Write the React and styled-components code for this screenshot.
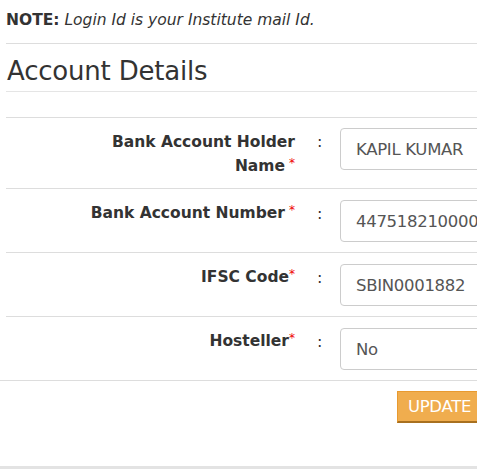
import React from "react";
import styled, { createGlobalStyle } from "styled-components";

const GlobalStyle = createGlobalStyle`
  html, body {
    margin: 0;
    padding: 0;
    background: #fff;
    overflow: hidden;
  }
  body {
    font-family: "DejaVu Sans", "Liberation Sans", sans-serif;
    color: #333;
  }
`;

const Page = styled.div`
  width: 477px;
  height: 472px;
  overflow: hidden;
  padding-left: 6px;
  box-sizing: border-box;
`;

const Note = styled.p`
  margin: 0;
  height: 44px;
  padding-top: 11px;
  box-sizing: border-box;
  font-size: 15.5px;
  color: #333;
  border-bottom: 1px solid #ddd;
`;

const NoteLabel = styled.b`
  font-weight: bold;
`;

const NoteText = styled.i`
  font-style: italic;
`;

const Heading = styled.h3`
  margin: 0;
  height: 48px;
  padding: 12px 0 0 1px;
  box-sizing: border-box;
  font-size: 26px;
  font-weight: normal;
  letter-spacing: -0.2px;
  color: #333;
  border-bottom: 1px solid #e5e5e5;
`;

const Spacer = styled.div`
  height: 25px;
`;

const Form = styled.div`
  width: 600px;
`;

const Row = styled.div`
  display: grid;
  grid-template-columns: 289px 45px 1fr;
  align-items: start;
  border-top: 1px solid #ddd;
  padding: ${({ $tall }) => ($tall ? "10px 0 10px" : "11px 0 10px")};
  min-height: 42px;
`;

const Label = styled.label`
  text-align: right;
  font-weight: bold;
  font-size: 15.5px;
  line-height: 24px;
  padding-top: ${({ $tall }) => ($tall ? "2px" : "1px")};
  color: #333;
`;

const Star = styled.span`
  color: #e00;
  font-weight: normal;
  font-size: 12px;
  vertical-align: top;
  line-height: 18px;
  margin-left: ${({ $gap }) => ($gap ? "4px" : "0")};
`;

const Colon = styled.span`
  font-size: 16px;
  line-height: 24px;
  padding-left: 22px;
  padding-top: 2px;
  color: #333;
`;

const Input = styled.div`
  width: 220px;
  height: 42px;
  box-sizing: border-box;
  border: 1px solid #ccc;
  border-radius: 4px;
  padding: 0 15px;
  display: flex;
  align-items: center;
  font-size: 16.5px;
  letter-spacing: -0.3px;
  color: #555;
  white-space: nowrap;
  overflow: hidden;
`;

const Actions = styled.div`
  border-top: 1px solid #ddd;
  display: flex;
  justify-content: flex-end;
  padding: 10px 1px 0 0;
  height: 89px;
  box-sizing: border-box;
  border-bottom: 3px solid #e3e3e3;
  margin: 0 -6px;
`;

const Button = styled.button`
  width: 85px;
  height: 32px;
  padding: 0 0 0 1px;
  background: #f0ad4e;
  color: #fff;
  border: none;
  border-right: 2px solid #a8701f;
  border-bottom: 2px solid #a8701f;
  border-top: 1px solid #e89a30;
  border-left: 1px solid #e89a30;
  font-family: "DejaVu Sans", sans-serif;
  font-size: 16.5px;
  letter-spacing: -0.3px;
  cursor: pointer;
`;

const fields = [
  { label: "Bank Account Holder Name", value: "KAPIL KUMAR", gap: true, tall: true },
  { label: "Bank Account Number", value: "447518210000612", gap: true },
  { label: "IFSC Code", value: "SBIN0001882" },
  { label: "Hosteller", value: "No" },
];

export default function App() {
  return (
    <Page>
      <GlobalStyle />
      <Note>
        <NoteLabel>NOTE:</NoteLabel> <NoteText>Login Id is your Institute mail Id.</NoteText>
      </Note>
      <Heading>Account Details</Heading>
      <Spacer />
      <Form>
        {fields.map((f) => (
          <Row key={f.label} $tall={f.tall}>
            <Label $tall={f.tall}>
              {f.tall ? (
                <>
                  Bank Account Holder
                  <br />
                  Name
                </>
              ) : (
                f.label
              )}
              <Star $gap={f.gap}>*</Star>
            </Label>
            <Colon>:</Colon>
            <Input>{f.value}</Input>
          </Row>
        ))}
      </Form>
      <Actions>
        <Button>UPDATE</Button>
      </Actions>
    </Page>
  );
}
